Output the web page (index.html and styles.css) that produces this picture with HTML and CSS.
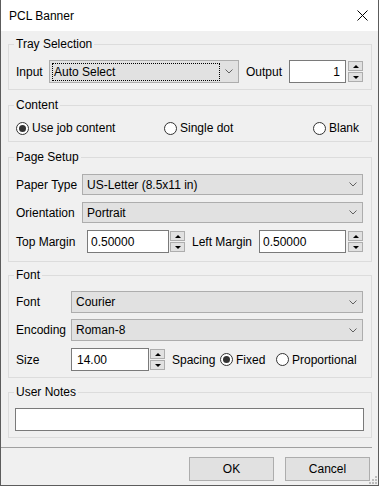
FILE: index.html
```html
<!DOCTYPE html>
<html lang="en">
<head>
  <meta charset="UTF-8" />
  <meta name="viewport" content="width=device-width, initial-scale=1.0"/>
  <title>PCL Banner</title>
  <link rel="stylesheet" href="styles.css">
</head>
<body>

  <div class="window">
    <!-- Barra de título -->
    <div class="titlebar">
      <span class="title">PCL Banner</span>
      <svg class="close" width="11" height="11" viewBox="0 0 11 11">
        <path d="M0.5 0.5L10.5 10.5M10.5 0.5L0.5 10.5" stroke="#000" stroke-width="1" fill="none"/>
      </svg>
    </div>

    <div class="dialog">
      <fieldset class="group tray">
        <legend>Tray Selection</legend>
        <div class="row">
          <span class="label w-input">Input</span>
          <div class="combo tray-combo">
            <span class="combo-text focus">Auto Select</span>
            <svg class="chevron" width="8" height="5" viewBox="0 0 8 5"><path d="M0.5 0.5L4 4L7.5 0.5" stroke="#606060" fill="none"/></svg>
          </div>
          <span class="label w-output">Output</span>
          <input class="edit w-out right" type="text" value="1">
          <div class="spin-btns"><span class="spin up"></span><span class="spin down"></span></div>
        </div>
      </fieldset>

      <fieldset class="group content">
        <legend>Content</legend>
        <div class="radios">
          <span class="radio"><span class="dot checked"></span>Use job content</span>
          <span class="radio"><span class="dot"></span>Single dot</span>
          <span class="radio"><span class="dot"></span>Blank</span>
        </div>
      </fieldset>

      <fieldset class="group page">
        <legend>Page Setup</legend>
        <div class="rows">
          <div class="row">
            <span class="label w-page">Paper Type</span>
            <div class="combo page-combo">
              <span class="combo-text">US-Letter (8.5x11 in)</span>
              <svg class="chevron" width="8" height="5" viewBox="0 0 8 5"><path d="M0.5 0.5L4 4L7.5 0.5" stroke="#606060" fill="none"/></svg>
            </div>
          </div>
          <div class="row">
            <span class="label w-page">Orientation</span>
            <div class="combo page-combo">
              <span class="combo-text">Portrait</span>
              <svg class="chevron" width="8" height="5" viewBox="0 0 8 5"><path d="M0.5 0.5L4 4L7.5 0.5" stroke="#606060" fill="none"/></svg>
            </div>
          </div>
          <div class="row">
            <span class="label w-top">Top Margin</span>
            <input class="edit w-top-in" type="text" value="0.50000">
            <div class="spin-btns near"><span class="spin up"></span><span class="spin down"></span></div>
            <span class="label w-left">Left Margin</span>
            <input class="edit w-left-in" type="text" value="0.50000">
            <div class="spin-btns"><span class="spin up"></span><span class="spin down"></span></div>
          </div>
        </div>
      </fieldset>

      <fieldset class="group font">
        <legend>Font</legend>
        <div class="rows">
          <div class="row">
            <span class="label w-font">Font</span>
            <div class="combo font-combo">
              <span class="combo-text">Courier</span>
              <svg class="chevron" width="8" height="5" viewBox="0 0 8 5"><path d="M0.5 0.5L4 4L7.5 0.5" stroke="#606060" fill="none"/></svg>
            </div>
          </div>
          <div class="row">
            <span class="label w-font">Encoding</span>
            <div class="combo font-combo">
              <span class="combo-text">Roman-8</span>
              <svg class="chevron" width="8" height="5" viewBox="0 0 8 5"><path d="M0.5 0.5L4 4L7.5 0.5" stroke="#606060" fill="none"/></svg>
            </div>
          </div>
          <div class="row">
            <span class="label w-font">Size</span>
            <input class="edit w-size" type="text" value="14.00">
            <div class="spin-btns near"><span class="spin up"></span><span class="spin down"></span></div>
            <span class="label w-spacing">Spacing</span>
            <span class="radio w-fixed"><span class="dot checked"></span>Fixed</span>
            <span class="radio"><span class="dot"></span>Proportional</span>
          </div>
        </div>
      </fieldset>

      <fieldset class="group notes">
        <legend>User Notes</legend>
        <input class="edit w-notes" type="text" value="">
      </fieldset>
    </div>

    <div class="separator"></div>

    <div class="buttons">
      <button class="btn">OK</button>
      <button class="btn">Cancel</button>
    </div>

    <svg class="grip" width="8" height="8" viewBox="0 0 8 8">
      <rect x="6" y="0" width="2" height="2" fill="#bcbcbc"/>
      <rect x="3" y="3" width="2" height="2" fill="#bcbcbc"/>
      <rect x="6" y="3" width="2" height="2" fill="#bcbcbc"/>
      <rect x="0" y="6" width="2" height="2" fill="#bcbcbc"/>
      <rect x="3" y="6" width="2" height="2" fill="#bcbcbc"/>
      <rect x="6" y="6" width="2" height="2" fill="#bcbcbc"/>
    </svg>
  </div>

</body>
</html>
```

FILE: styles.css
```css
* {
  margin: 0;
  padding: 0;
  box-sizing: border-box;
  font-family: 'Liberation Sans', Arial, sans-serif;
}

body {
  font-size: 12px;
  color: #000;
  background: #f0f0f0;
  overflow: hidden;
}

.window {
  position: relative;
  width: 379px;
  height: 486px;
  background: #f0f0f0;
  border: 1px solid #5c5c5c;
  border-top: none;
  display: flex;
  flex-direction: column;
}

.titlebar {
  height: 31px;
  flex-shrink: 0;
  background: #fff;
  display: flex;
  align-items: center;
  justify-content: space-between;
  padding: 0 10px 0 8px;
}

.title {
  font-size: 12px;
}

.dialog {
  padding: 6px 6px 0 7px;
  display: flex;
  flex-direction: column;
}

.group {
  border: 1px solid #dcdcdc;
  min-width: 0;
  padding: 9px 8px 6px 7px;
  margin-top: 8px;
}

.group.tray {
  margin-top: 0;
}

.group.content {
  padding: 8px 8px 5px 7px;
}

.group.page {
  padding: 10px 8px 8px 7px;
}

.group.font {
  margin-top: 6px;
}

.group.notes {
  margin-top: 7px;
}

legend {
  padding: 0 2px;
  margin-left: -2px;
  line-height: 14px;
}

.row {
  display: flex;
  align-items: center;
}

.rows {
  display: flex;
  flex-direction: column;
  gap: 7px;
}

.font .rows {
  gap: 6px;
}

.font .rows .row:last-child {
  margin-top: 1px;
}

.label {
  flex-shrink: 0;
  white-space: nowrap;
}

.w-input { width: 33px; }
.w-output { width: 43px; margin-left: 7px; }
.w-page { width: 66px; }
.w-top { width: 71px; }
.w-left { width: 67px; margin-left: 7px; }
.w-font { width: 55px; }
.w-spacing { width: 48px; margin-left: 7px; }

/* Combos */
.combo {
  display: flex;
  align-items: center;
  justify-content: space-between;
  background: #e1e1e1;
  border: 1px solid #adadad;
  padding: 0 5px 0 4px;
}

.tray-combo {
  width: 190px;
  height: 23px;
  padding-left: 2px;
}

.page-combo {
  width: 282px;
  height: 21px;
}

.font-combo {
  width: 293px;
  height: 22px;
}

.combo-text.focus {
  width: 168px;
  height: 18px;
  line-height: 16px;
  border: 1px dotted #000;
  padding-left: 1px;
}

/* Caixas de texto */
.edit {
  height: 23px;
  border: 1px solid #7a7a7a;
  background: #fff;
  font-size: 12px;
  padding: 0 3px;
  outline: none;
  color: #000;
}

.edit.right {
  text-align: right;
  padding-right: 5px;
}

.w-out { width: 57px; }
.w-top-in { width: 82px; }
.w-left-in { width: 87px; }
.w-size { width: 78px; padding-left: 5px; }
.w-notes { width: 349px; margin-left: -1px; }

.spin-btns {
  display: flex;
  flex-direction: column;
  gap: 1px;
  margin-left: 2px;
}

.spin-btns.near {
  margin-left: 1px;
}

.spin {
  width: 15px;
  height: 10px;
  background: #e1e1e1;
  border: 1px solid #adadad;
  display: flex;
  align-items: center;
  justify-content: center;
}

.spin::after {
  content: '';
  border-left: 3px solid transparent;
  border-right: 3px solid transparent;
}

.spin.up::after {
  border-bottom: 3px solid #000;
}

.spin.down::after {
  border-top: 3px solid #000;
}

/* Radios */
.radios {
  display: grid;
  grid-template-columns: 148px 149px auto;
  height: 16px;
  align-items: center;
}

.radio {
  display: inline-flex;
  align-items: center;
  gap: 3px;
  white-space: nowrap;
}

.w-fixed {
  width: 56px;
}

.dot {
  width: 13px;
  height: 13px;
  border-radius: 50%;
  border: 1px solid #333;
  background: #fff;
  display: flex;
  align-items: center;
  justify-content: center;
  flex-shrink: 0;
}

.dot.checked::after {
  content: '';
  width: 7px;
  height: 7px;
  border-radius: 50%;
  background: #333;
}

/* Rodapé */
.separator {
  height: 1px;
  background: #a0a0a0;
  margin: 9px 6px 0 0;
}

.buttons {
  display: flex;
  justify-content: flex-end;
  gap: 11px;
  margin-top: 9px;
  padding-right: 8px;
}

.btn {
  width: 85px;
  height: 24px;
  background: #e1e1e1;
  border: 1px solid #adadad;
  font-size: 12px;
  color: #000;
}

.grip {
  position: absolute;
  right: 1px;
  bottom: 1px;
}
```
